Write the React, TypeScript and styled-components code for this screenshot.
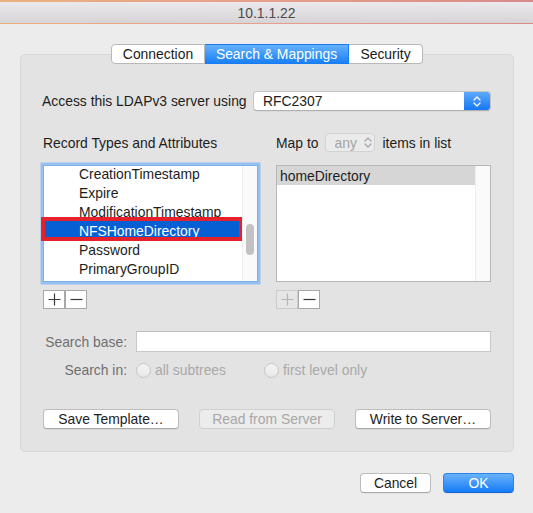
import React from "react";
import styled, { createGlobalStyle, css } from "styled-components";

const GlobalStyle = createGlobalStyle`
  html, body { margin: 0; padding: 0; }
  body {
    font-family: "Liberation Sans", Arial, sans-serif;
    font-size: 13.9px;
    color: #1d1d1d;
    -webkit-font-smoothing: antialiased;
  }
  * { box-sizing: border-box; }
`;

const Window = styled.div`
  width: 533px;
  height: 513px;
  background: #ececec;
  display: flex;
  flex-direction: column;
  overflow: hidden;
`;

const TitleBar = styled.div`
  height: 24px;
  flex: none;
  border-top: 2px solid;
  border-image: linear-gradient(90deg, #eab07c, #e6a08c 50%, #d88a8a) 1;
  border-bottom: 1px solid #b3b3b3;
  background: linear-gradient(#ebe9eb, #d6d4d6);
  display: flex;
  align-items: center;
  justify-content: center;
  color: #4b4b4b;
  font-size: 13.9px;
  padding-top: 1px;
`;

const Body = styled.div`
  padding: 20px 19px 0 20px;
  display: flex;
  flex-direction: column;
`;

const TabRow = styled.div`
  display: flex;
  justify-content: center;
  position: relative;
  z-index: 1;
`;

const Tab = styled.div<{ $active?: boolean; $w: number }>`
  width: ${(p) => p.$w}px;
  height: 20px;
  display: flex;
  align-items: center;
  justify-content: center;
  background: #fff;
  border: 1px solid #b9b9b9;
  border-left-width: 0;
  color: #1a1a1a;
  &:first-child {
    border-left-width: 1px;
    border-radius: 4px 0 0 4px;
  }
  &:last-child {
    border-radius: 0 4px 4px 0;
  }
  ${(p) =>
    p.$active &&
    css`
      background: linear-gradient(#66b1fb, #1980f6);
      border-color: #1a7cf0;
      color: #fff;
    `}
`;

const GroupBox = styled.div`
  margin-top: -10px;
  height: 398px;
  background: #e3e3e3;
  border: 1px solid #d8d8d8;
  border-radius: 5px;
  display: flex;
  flex-direction: column;
  padding: 0 22px;
`;

const PopupRow = styled.div`
  margin-top: 36px;
  display: flex;
  align-items: center;
  height: 20px;
  margin-left: -1px;
`;

const Label = styled.span`
  color: #1d1d1d;
  white-space: nowrap;
`;

const Popup = styled.div`
  margin-left: auto;
  width: 238px;
  height: 20px;
  background: #fff;
  border: 1px solid #c4c4c4;
  border-bottom-color: #b0b0b0;
  border-radius: 4px;
  display: flex;
  align-items: center;
  overflow: hidden;
  box-shadow: 0 0.5px 0.5px rgba(0, 0, 0, 0.08);
`;

const PopupText = styled.span`
  flex: 1;
  padding-left: 9px;
`;

const PopupArrows = styled.div`
  width: 26px;
  height: 100%;
  background: linear-gradient(#5eaafa, #1677f4);
  display: flex;
  align-items: center;
  justify-content: center;
`;

const Columns = styled.div`
  margin-top: 22px;
  display: grid;
  grid-template-columns: 215px 215px;
  column-gap: 18px;
`;

const Column = styled.div`
  display: flex;
  flex-direction: column;
`;

const Header = styled.div`
  height: 19px;
  display: flex;
  align-items: center;
  gap: 7px;
`;

const Stepper = styled.div`
  width: 50px;
  flex: none;
  height: 19px;
  border: 1px solid #d2d2d2;
  border-radius: 4px;
  background: #ebebeb;
  color: #a3a3a3;
  display: flex;
  align-items: center;
  padding-left: 8px;
  gap: 7px;
`;

const ListBox = styled.div<{ $focused?: boolean }>`
  margin-top: 13px;
  height: 117px;
  background: #fff;
  border: 1px solid ${(p) => (p.$focused ? "#7fb0ee" : "#b7b7b7")};
  display: flex;
  ${(p) =>
    p.$focused &&
    css`
      box-shadow: 0 0 0 2.5px #97c0f2;
    `}
`;

const Rows = styled.div<{ $offset?: number }>`
  flex: 1;
  display: flex;
  flex-direction: column;
  margin-top: ${(p) => p.$offset ?? 0}px;
`;

const Row = styled.div<{ $indent?: boolean; $sel?: "blue" | "gray"; $marked?: boolean }>`
  height: 19px;
  flex: none;
  display: flex;
  align-items: center;
  padding-left: ${(p) => (p.$indent ? 35 : 3)}px;
  position: relative;
  ${(p) =>
    p.$sel === "blue" &&
    css`
      background: #0760d3;
      color: #fff;
    `}
  ${(p) =>
    p.$sel === "gray" &&
    css`
      background: #d6d6d6;
    `}
  ${(p) =>
    p.$marked &&
    css`
      &::after {
        content: "";
        position: absolute;
        left: -3px;
        right: -1px;
        top: -4px;
        bottom: -1px;
        border: 4px solid #e5212b;
      }
    `}
`;

const ScrollTrack = styled.div`
  width: 15px;
  flex: none;
  background: #fafafa;
  border-left: 1px solid #ededed;
  position: relative;
`;

const Thumb = styled.div`
  position: absolute;
  left: 3px;
  width: 8px;
  top: 58px;
  height: 31px;
  border-radius: 4px;
  background: #c2c2c2;
`;

const PlusMinus = styled.div`
  margin-top: 8px;
  display: flex;
`;

const PMButton = styled.div<{ $disabled?: boolean }>`
  width: 22px;
  height: 19px;
  border: 1px solid ${(p) => (p.$disabled ? "#cbcbcb" : "#a8a8a8")};
  background: ${(p) => (p.$disabled ? "#e6e6e6" : "#fff")};
  display: flex;
  align-items: center;
  justify-content: center;
  & + & {
    border-left-color: #a8a8a8;
  }
`;

const FormGrid = styled.div`
  margin-top: 22px;
  display: grid;
  grid-template-columns: 85px 1fr;
  column-gap: 9px;
  row-gap: 9px;
  align-items: center;
  margin-left: -1px;
`;

const FormLabel = styled.span`
  text-align: right;
  color: #6f6f6f;
  white-space: nowrap;
`;

const TextField = styled.div`
  height: 21px;
  background: #fff;
  border: 1px solid #c8c8c8;
  border-top-color: #bdbdbd;
`;

const RadioGroup = styled.div`
  display: flex;
  align-items: center;
  height: 18px;
`;

const RadioOption = styled.div<{ $w: number }>`
  width: ${(p) => p.$w}px;
  display: flex;
  align-items: center;
  gap: 4px;
  color: #a9a9a9;
`;

const RadioCircle = styled.div`
  width: 15px;
  height: 15px;
  flex: none;
  border-radius: 50%;
  border: 1px solid #c6c6c6;
  background: linear-gradient(#f3f3f3, #e9e9e9);
`;

const ActionRow = styled.div`
  margin-top: 30px;
  display: flex;
  justify-content: space-between;
`;

const PushButton = styled.div<{ $w: number; $disabled?: boolean; $primary?: boolean }>`
  width: ${(p) => p.$w}px;
  height: 20px;
  border-radius: 4px;
  display: flex;
  align-items: center;
  justify-content: center;
  background: #fff;
  border: 1px solid #bdbdbd;
  border-bottom-color: #a9a9a9;
  box-shadow: 0 0.5px 0.5px rgba(0, 0, 0, 0.1);
  color: #1d1d1d;
  white-space: nowrap;
  ${(p) =>
    p.$disabled &&
    css`
      background: #ececec;
      border-color: #d0d0d0;
      color: #a7a7a7;
      box-shadow: none;
    `}
  ${(p) =>
    p.$primary &&
    css`
      background: linear-gradient(#6ab2fb, #157cf6);
      border-color: #2a82ee;
      border-bottom-color: #1466d6;
      color: #fff;
    `}
`;

const Footer = styled.div`
  margin-top: 21px;
  display: flex;
  justify-content: flex-end;
  gap: 12px;
`;

const Chevrons = ({ color, w = 8 }: { color: string; w?: number }) => (
  <svg width={w} height="13" viewBox="0 0 8 13" fill="none">
    <path d="M1 5 L4 2 L7 5" stroke={color} strokeWidth="1.3" strokeLinecap="round" strokeLinejoin="round" />
    <path d="M1 8 L4 11 L7 8" stroke={color} strokeWidth="1.3" strokeLinecap="round" strokeLinejoin="round" />
  </svg>
);

const PlusIcon = ({ color }: { color: string }) => (
  <svg width="13" height="13" viewBox="0 0 13 13">
    <path d="M6.5 0.5 V12.5 M0.5 6.5 H12.5" stroke={color} strokeWidth="1.2" />
  </svg>
);

const MinusIcon = ({ color }: { color: string }) => (
  <svg width="13" height="13" viewBox="0 0 13 13">
    <path d="M0.5 6.5 H12.5" stroke={color} strokeWidth="1.2" />
  </svg>
);

const attributes = [
  "CreationTimestamp",
  "Expire",
  "ModificationTimestamp",
  "NFSHomeDirectory",
  "Password",
  "PrimaryGroupID",
];

export default function App() {
  return (
    <>
      <GlobalStyle />
      <Window>
        <TitleBar>10.1.1.22</TitleBar>
        <Body>
          <TabRow>
            <Tab $w={94}>Connection</Tab>
            <Tab $w={144} $active>
              Search &amp; Mappings
            </Tab>
            <Tab $w={74}>Security</Tab>
          </TabRow>
          <GroupBox>
            <PopupRow>
              <Label>Access this LDAPv3 server using</Label>
              <Popup>
                <PopupText>RFC2307</PopupText>
                <PopupArrows>
                  <Chevrons color="#fff" />
                </PopupArrows>
              </Popup>
            </PopupRow>
            <Columns>
              <Column>
                <Header>
                  <Label>Record Types and Attributes</Label>
                </Header>
                <ListBox $focused>
                  <Rows $offset={-2}>
                    {attributes.map((a) => (
                      <Row
                        key={a}
                        $indent
                        $sel={a === "NFSHomeDirectory" ? "blue" : undefined}
                        $marked={a === "NFSHomeDirectory"}
                      >
                        {a}
                      </Row>
                    ))}
                  </Rows>
                  <ScrollTrack>
                    <Thumb />
                  </ScrollTrack>
                </ListBox>
                <PlusMinus>
                  <PMButton>
                    <PlusIcon color="#3a3a3a" />
                  </PMButton>
                  <PMButton>
                    <MinusIcon color="#3a3a3a" />
                  </PMButton>
                </PlusMinus>
              </Column>
              <Column>
                <Header>
                  <Label>Map to</Label>
                  <Stepper>
                    any
                    <Chevrons color="#a8a8a8" w={8} />
                  </Stepper>
                  <Label>items in list</Label>
                </Header>
                <ListBox>
                  <Rows>
                    <Row $sel="gray">homeDirectory</Row>
                  </Rows>
                  <ScrollTrack />
                </ListBox>
                <PlusMinus>
                  <PMButton $disabled>
                    <PlusIcon color="#b3b3b3" />
                  </PMButton>
                  <PMButton>
                    <MinusIcon color="#3a3a3a" />
                  </PMButton>
                </PlusMinus>
              </Column>
            </Columns>
            <FormGrid>
              <FormLabel>Search base:</FormLabel>
              <TextField />
              <FormLabel>Search in:</FormLabel>
              <RadioGroup>
                <RadioOption $w={128}>
                  <RadioCircle />
                  all subtrees
                </RadioOption>
                <RadioOption $w={140}>
                  <RadioCircle />
                  first level only
                </RadioOption>
              </RadioGroup>
            </FormGrid>
            <ActionRow>
              <PushButton $w={136}>Save Template…</PushButton>
              <PushButton $w={136} $disabled>
                Read from Server
              </PushButton>
              <PushButton $w={136}>Write to Server…</PushButton>
            </ActionRow>
          </GroupBox>
          <Footer>
            <PushButton $w={71}>Cancel</PushButton>
            <PushButton $w={71} $primary>
              OK
            </PushButton>
          </Footer>
        </Body>
      </Window>
    </>
  );
}
